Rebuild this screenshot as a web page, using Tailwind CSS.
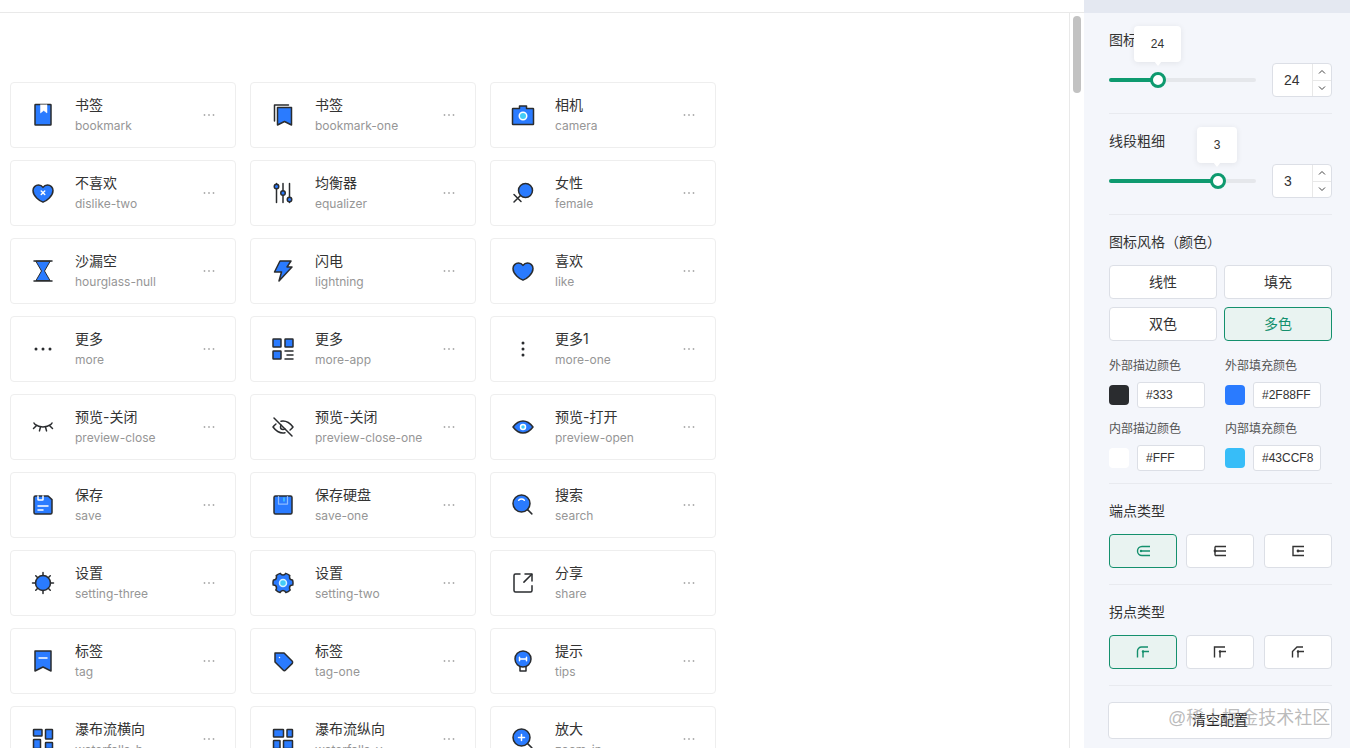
<!DOCTYPE html>
<html lang="zh-CN">
<head>
  <meta charset="UTF-8">
  <title>IconPark</title>
  <script src="https://cdn.jsdelivr.net/npm/@tailwindcss/browser@4"></script>
</head>
<body class="bg-white text-[#333] font-['Inter','Noto_Sans_CJK_SC',sans-serif]">
<div class="relative flex h-[748px] w-[1350px] overflow-hidden">

  <!-- Main column -->
  <div class="flex w-[1084px] flex-col">
    <div class="h-[13px] shrink-0 border-b border-[#e9e9e9]"></div>
    <div class="flex min-h-0 flex-1">
      <div class="min-w-0 flex-1 overflow-hidden pl-[10px] pt-[69px]">
        <div class="grid grid-cols-[repeat(3,226px)] auto-rows-[66px] gap-x-[14px] gap-y-[12px]">

          <!-- bookmark -->
          <div class="flex items-center rounded-[4px] border border-[#eeeeee] pl-[20px] pr-[20px]">
            <svg class="h-6 w-6 shrink-0" viewBox="0 0 48 48" fill="none" stroke="#2a2c2f" stroke-width="3" stroke-linejoin="round" stroke-linecap="round"><rect x="8" y="3" width="32" height="41" rx="1" fill="#2a7bff"/><path d="M19 4v16l6.5-5 6.5 5V4z" fill="#fff" stroke="#fff" stroke-width="1"/></svg>
            <div class="ml-[20px] min-w-0 flex-1"><div class="text-[14px] leading-[20px]">书签</div><div class="mt-[2px] text-[12px] leading-[18px] text-[#969696]">bookmark</div></div>
            <svg class="h-[12px] w-[12px] shrink-0" viewBox="0 0 12 12" fill="#aaa"><circle cx="1.5" cy="6" r="0.9"/><circle cx="6" cy="6" r="0.9"/><circle cx="10.5" cy="6" r="0.9"/></svg>
          </div>
          <!-- bookmark-one -->
          <div class="flex items-center rounded-[4px] border border-[#eeeeee] pl-[20px] pr-[20px]">
            <svg class="h-6 w-6 shrink-0" viewBox="0 0 48 48" fill="none" stroke="#2a2c2f" stroke-width="3" stroke-linejoin="round" stroke-linecap="round"><path d="M7 36V4h28"/><path d="M13 9h28v35l-14-7-14 7z" fill="#2a7bff"/></svg>
            <div class="ml-[20px] min-w-0 flex-1"><div class="text-[14px] leading-[20px]">书签</div><div class="mt-[2px] text-[12px] leading-[18px] text-[#969696]">bookmark-one</div></div>
            <svg class="h-[12px] w-[12px] shrink-0" viewBox="0 0 12 12" fill="#aaa"><circle cx="1.5" cy="6" r="0.9"/><circle cx="6" cy="6" r="0.9"/><circle cx="10.5" cy="6" r="0.9"/></svg>
          </div>
          <!-- camera -->
          <div class="flex items-center rounded-[4px] border border-[#eeeeee] pl-[20px] pr-[20px]">
            <svg class="h-6 w-6 shrink-0" viewBox="0 0 48 48" fill="none" stroke="#2a2c2f" stroke-width="3" stroke-linejoin="round" stroke-linecap="round"><path d="M17 11V6h14v5h13a1 1 0 0 1 1 1v30a1 1 0 0 1-1 1H4a1 1 0 0 1-1-1V12a1 1 0 0 1 1-1z" fill="#2a7bff"/><circle cx="24" cy="26" r="7.5" fill="#43CCF8" stroke="#fff"/></svg>
            <div class="ml-[20px] min-w-0 flex-1"><div class="text-[14px] leading-[20px]">相机</div><div class="mt-[2px] text-[12px] leading-[18px] text-[#969696]">camera</div></div>
            <svg class="h-[12px] w-[12px] shrink-0" viewBox="0 0 12 12" fill="#aaa"><circle cx="1.5" cy="6" r="0.9"/><circle cx="6" cy="6" r="0.9"/><circle cx="10.5" cy="6" r="0.9"/></svg>
          </div>

          <!-- dislike-two -->
          <div class="flex items-center rounded-[4px] border border-[#eeeeee] pl-[20px] pr-[20px]">
            <svg class="h-6 w-6 shrink-0" viewBox="0 0 48 48" fill="none" stroke="#2a2c2f" stroke-width="3" stroke-linejoin="round" stroke-linecap="round"><path d="M15 8C8.925 8 4 12.925 4 19c0 11 13 21 20 23.326C31 40 44 30 44 19c0-6.075-4.925-11-11-11-3.72 0-7.01 1.847-9 4.674A10.987 10.987 0 0 0 15 8Z" fill="#2a7bff"/><path d="M20.5 20l7 7M27.5 20l-7 7" stroke="#fff"/></svg>
            <div class="ml-[20px] min-w-0 flex-1"><div class="text-[14px] leading-[20px]">不喜欢</div><div class="mt-[2px] text-[12px] leading-[18px] text-[#969696]">dislike-two</div></div>
            <svg class="h-[12px] w-[12px] shrink-0" viewBox="0 0 12 12" fill="#aaa"><circle cx="1.5" cy="6" r="0.9"/><circle cx="6" cy="6" r="0.9"/><circle cx="10.5" cy="6" r="0.9"/></svg>
          </div>
          <!-- equalizer -->
          <div class="flex items-center rounded-[4px] border border-[#eeeeee] pl-[20px] pr-[20px]">
            <svg class="h-6 w-6 shrink-0" viewBox="0 0 48 48" fill="none" stroke="#2a2c2f" stroke-width="3" stroke-linejoin="round" stroke-linecap="round"><path d="M11 5v38M24 5v38M37 5v38"/><circle cx="11" cy="11" r="4.5" fill="#2a7bff"/><circle cx="24" cy="24" r="4.5" fill="#2a7bff"/><circle cx="37" cy="37" r="4.5" fill="#2a7bff"/></svg>
            <div class="ml-[20px] min-w-0 flex-1"><div class="text-[14px] leading-[20px]">均衡器</div><div class="mt-[2px] text-[12px] leading-[18px] text-[#969696]">equalizer</div></div>
            <svg class="h-[12px] w-[12px] shrink-0" viewBox="0 0 12 12" fill="#aaa"><circle cx="1.5" cy="6" r="0.9"/><circle cx="6" cy="6" r="0.9"/><circle cx="10.5" cy="6" r="0.9"/></svg>
          </div>
          <!-- female -->
          <div class="flex items-center rounded-[4px] border border-[#eeeeee] pl-[20px] pr-[20px]">
            <svg class="h-6 w-6 shrink-0" viewBox="0 0 48 48" fill="none" stroke="#2a2c2f" stroke-width="3" stroke-linejoin="round" stroke-linecap="round"><circle cx="29" cy="19" r="14" fill="#2a7bff"/><path d="M19 29L6 42M6 27l14 14"/></svg>
            <div class="ml-[20px] min-w-0 flex-1"><div class="text-[14px] leading-[20px]">女性</div><div class="mt-[2px] text-[12px] leading-[18px] text-[#969696]">female</div></div>
            <svg class="h-[12px] w-[12px] shrink-0" viewBox="0 0 12 12" fill="#aaa"><circle cx="1.5" cy="6" r="0.9"/><circle cx="6" cy="6" r="0.9"/><circle cx="10.5" cy="6" r="0.9"/></svg>
          </div>

          <!-- hourglass-null -->
          <div class="flex items-center rounded-[4px] border border-[#eeeeee] pl-[20px] pr-[20px]">
            <svg class="h-6 w-6 shrink-0" viewBox="0 0 48 48" fill="none" stroke="#2a2c2f" stroke-width="3" stroke-linejoin="round" stroke-linecap="round"><path d="M10 5l11 19-11 19h28L27 24 38 5z" fill="#2a7bff" stroke-width="2"/><path d="M6 4h36M6 44h36"/></svg>
            <div class="ml-[20px] min-w-0 flex-1"><div class="text-[14px] leading-[20px]">沙漏空</div><div class="mt-[2px] text-[12px] leading-[18px] text-[#969696]">hourglass-null</div></div>
            <svg class="h-[12px] w-[12px] shrink-0" viewBox="0 0 12 12" fill="#aaa"><circle cx="1.5" cy="6" r="0.9"/><circle cx="6" cy="6" r="0.9"/><circle cx="10.5" cy="6" r="0.9"/></svg>
          </div>
          <!-- lightning -->
          <div class="flex items-center rounded-[4px] border border-[#eeeeee] pl-[20px] pr-[20px]">
            <svg class="h-6 w-6 shrink-0" viewBox="0 0 48 48" fill="none" stroke="#2a2c2f" stroke-width="3" stroke-linejoin="round" stroke-linecap="round"><path d="M18 4h22l-8 12h10L16 44l5-18H7z" fill="#2a7bff"/></svg>
            <div class="ml-[20px] min-w-0 flex-1"><div class="text-[14px] leading-[20px]">闪电</div><div class="mt-[2px] text-[12px] leading-[18px] text-[#969696]">lightning</div></div>
            <svg class="h-[12px] w-[12px] shrink-0" viewBox="0 0 12 12" fill="#aaa"><circle cx="1.5" cy="6" r="0.9"/><circle cx="6" cy="6" r="0.9"/><circle cx="10.5" cy="6" r="0.9"/></svg>
          </div>
          <!-- like -->
          <div class="flex items-center rounded-[4px] border border-[#eeeeee] pl-[20px] pr-[20px]">
            <svg class="h-6 w-6 shrink-0" viewBox="0 0 48 48" fill="none" stroke="#2a2c2f" stroke-width="3" stroke-linejoin="round" stroke-linecap="round"><path d="M15 8C8.925 8 4 12.925 4 19c0 11 13 21 20 23.326C31 40 44 30 44 19c0-6.075-4.925-11-11-11-3.72 0-7.01 1.847-9 4.674A10.987 10.987 0 0 0 15 8Z" fill="#2a7bff"/></svg>
            <div class="ml-[20px] min-w-0 flex-1"><div class="text-[14px] leading-[20px]">喜欢</div><div class="mt-[2px] text-[12px] leading-[18px] text-[#969696]">like</div></div>
            <svg class="h-[12px] w-[12px] shrink-0" viewBox="0 0 12 12" fill="#aaa"><circle cx="1.5" cy="6" r="0.9"/><circle cx="6" cy="6" r="0.9"/><circle cx="10.5" cy="6" r="0.9"/></svg>
          </div>

          <!-- more -->
          <div class="flex items-center rounded-[4px] border border-[#eeeeee] pl-[20px] pr-[20px]">
            <svg class="h-6 w-6 shrink-0" viewBox="0 0 48 48" fill="#2a2c2f"><circle cx="10" cy="24" r="3"/><circle cx="24" cy="24" r="3"/><circle cx="38" cy="24" r="3"/></svg>
            <div class="ml-[20px] min-w-0 flex-1"><div class="text-[14px] leading-[20px]">更多</div><div class="mt-[2px] text-[12px] leading-[18px] text-[#969696]">more</div></div>
            <svg class="h-[12px] w-[12px] shrink-0" viewBox="0 0 12 12" fill="#aaa"><circle cx="1.5" cy="6" r="0.9"/><circle cx="6" cy="6" r="0.9"/><circle cx="10.5" cy="6" r="0.9"/></svg>
          </div>
          <!-- more-app -->
          <div class="flex items-center rounded-[4px] border border-[#eeeeee] pl-[20px] pr-[20px]">
            <svg class="h-6 w-6 shrink-0" viewBox="0 0 48 48" fill="none" stroke="#2a2c2f" stroke-width="3" stroke-linejoin="round" stroke-linecap="round"><rect x="4" y="4" width="16" height="16" rx="1" fill="#2a7bff"/><rect x="28" y="4" width="16" height="16" rx="1" fill="#2a7bff"/><rect x="4" y="28" width="16" height="16" rx="1" fill="#2a7bff"/><path d="M28 28h16M32 36h12M28 44h16"/></svg>
            <div class="ml-[20px] min-w-0 flex-1"><div class="text-[14px] leading-[20px]">更多</div><div class="mt-[2px] text-[12px] leading-[18px] text-[#969696]">more-app</div></div>
            <svg class="h-[12px] w-[12px] shrink-0" viewBox="0 0 12 12" fill="#aaa"><circle cx="1.5" cy="6" r="0.9"/><circle cx="6" cy="6" r="0.9"/><circle cx="10.5" cy="6" r="0.9"/></svg>
          </div>
          <!-- more-one -->
          <div class="flex items-center rounded-[4px] border border-[#eeeeee] pl-[20px] pr-[20px]">
            <svg class="h-6 w-6 shrink-0" viewBox="0 0 48 48" fill="#2a2c2f"><circle cx="24" cy="12" r="3"/><circle cx="24" cy="24" r="3"/><circle cx="24" cy="36" r="3"/></svg>
            <div class="ml-[20px] min-w-0 flex-1"><div class="text-[14px] leading-[20px]">更多1</div><div class="mt-[2px] text-[12px] leading-[18px] text-[#969696]">more-one</div></div>
            <svg class="h-[12px] w-[12px] shrink-0" viewBox="0 0 12 12" fill="#aaa"><circle cx="1.5" cy="6" r="0.9"/><circle cx="6" cy="6" r="0.9"/><circle cx="10.5" cy="6" r="0.9"/></svg>
          </div>

          <!-- preview-close -->
          <div class="flex items-center rounded-[4px] border border-[#eeeeee] pl-[20px] pr-[20px]">
            <svg class="h-6 w-6 shrink-0" viewBox="0 0 48 48" fill="none" stroke="#2a2c2f" stroke-width="3" stroke-linejoin="round" stroke-linecap="round"><path d="M6 16C6.63 17.22 7.6 18.35 8.82 19.36 12.26 22.17 17.78 24 24 24s11.74-1.83 15.18-4.64C40.4 18.35 41.37 17.22 42 16"/><path d="M28.98 24l2.07 7.73M37.35 21.35l5.66 5.66M5 27.01l5.66-5.66M16.93 31.73L19 24"/></svg>
            <div class="ml-[20px] min-w-0 flex-1"><div class="text-[14px] leading-[20px]">预览-关闭</div><div class="mt-[2px] text-[12px] leading-[18px] text-[#969696]">preview-close</div></div>
            <svg class="h-[12px] w-[12px] shrink-0" viewBox="0 0 12 12" fill="#aaa"><circle cx="1.5" cy="6" r="0.9"/><circle cx="6" cy="6" r="0.9"/><circle cx="10.5" cy="6" r="0.9"/></svg>
          </div>
          <!-- preview-close-one -->
          <div class="flex items-center rounded-[4px] border border-[#eeeeee] pl-[20px] pr-[20px]">
            <svg class="h-6 w-6 shrink-0" viewBox="0 0 48 48" fill="none" stroke="#2a2c2f" stroke-width="3" stroke-linejoin="round" stroke-linecap="round"><path d="M9.86 18C6.24 21 4 24 4 24s8.95 12 20 12c1.37 0 2.71-.18 4-.51M20.03 12.5c1.28-.32 2.61-.5 3.97-.5 11.05 0 20 12 20 12s-2.24 3-5.86 6"/><path d="M20.31 20.62A5 5 0 0 0 19 24a5 5 0 0 0 5 5c1.36 0 2.6-.55 3.5-1.43"/><path d="M42 42L6 6"/></svg>
            <div class="ml-[20px] min-w-0 flex-1"><div class="text-[14px] leading-[20px]">预览-关闭</div><div class="mt-[2px] text-[12px] leading-[18px] text-[#969696]">preview-close-one</div></div>
            <svg class="h-[12px] w-[12px] shrink-0" viewBox="0 0 12 12" fill="#aaa"><circle cx="1.5" cy="6" r="0.9"/><circle cx="6" cy="6" r="0.9"/><circle cx="10.5" cy="6" r="0.9"/></svg>
          </div>
          <!-- preview-open -->
          <div class="flex items-center rounded-[4px] border border-[#eeeeee] pl-[20px] pr-[20px]">
            <svg class="h-6 w-6 shrink-0" viewBox="0 0 48 48" fill="none" stroke="#2a2c2f" stroke-width="3" stroke-linejoin="round" stroke-linecap="round"><path d="M24 36c11.05 0 20-12 20-12s-8.95-12-20-12S4 24 4 24s8.95 12 20 12Z" fill="#2a7bff"/><circle cx="24" cy="24" r="5" fill="#43CCF8" stroke="#fff"/></svg>
            <div class="ml-[20px] min-w-0 flex-1"><div class="text-[14px] leading-[20px]">预览-打开</div><div class="mt-[2px] text-[12px] leading-[18px] text-[#969696]">preview-open</div></div>
            <svg class="h-[12px] w-[12px] shrink-0" viewBox="0 0 12 12" fill="#aaa"><circle cx="1.5" cy="6" r="0.9"/><circle cx="6" cy="6" r="0.9"/><circle cx="10.5" cy="6" r="0.9"/></svg>
          </div>

          <!-- save -->
          <div class="flex items-center rounded-[4px] border border-[#eeeeee] pl-[20px] pr-[20px]">
            <svg class="h-6 w-6 shrink-0" viewBox="0 0 48 48" fill="none" stroke="#2a2c2f" stroke-width="3" stroke-linejoin="round" stroke-linecap="round"><path d="M6 9c0-1.66 1.34-3 3-3h25.28L42 13.21V39c0 1.66-1.34 3-3 3H9c-1.66 0-3-1.34-3-3V9Z" fill="#2a7bff"/><path d="M24 6v7.38c0 .34-.45.62-1 .62h-8c-.55 0-1-.28-1-.62V6" stroke="#fff"/><path d="M14 26h20M14 34h10" stroke="#fff"/></svg>
            <div class="ml-[20px] min-w-0 flex-1"><div class="text-[14px] leading-[20px]">保存</div><div class="mt-[2px] text-[12px] leading-[18px] text-[#969696]">save</div></div>
            <svg class="h-[12px] w-[12px] shrink-0" viewBox="0 0 12 12" fill="#aaa"><circle cx="1.5" cy="6" r="0.9"/><circle cx="6" cy="6" r="0.9"/><circle cx="10.5" cy="6" r="0.9"/></svg>
          </div>
          <!-- save-one -->
          <div class="flex items-center rounded-[4px] border border-[#eeeeee] pl-[20px] pr-[20px]">
            <svg class="h-6 w-6 shrink-0" viewBox="0 0 48 48" fill="none" stroke="#2a2c2f" stroke-width="3" stroke-linejoin="round" stroke-linecap="round"><rect x="6" y="6" width="36" height="36" rx="3" fill="#2a7bff"/><path d="M15 7v15h18V7" stroke="#8fbcff" stroke-width="2.5"/><path d="M26 10v6" stroke="#43CCF8"/></svg>
            <div class="ml-[20px] min-w-0 flex-1"><div class="text-[14px] leading-[20px]">保存硬盘</div><div class="mt-[2px] text-[12px] leading-[18px] text-[#969696]">save-one</div></div>
            <svg class="h-[12px] w-[12px] shrink-0" viewBox="0 0 12 12" fill="#aaa"><circle cx="1.5" cy="6" r="0.9"/><circle cx="6" cy="6" r="0.9"/><circle cx="10.5" cy="6" r="0.9"/></svg>
          </div>
          <!-- search -->
          <div class="flex items-center rounded-[4px] border border-[#eeeeee] pl-[20px] pr-[20px]">
            <svg class="h-6 w-6 shrink-0" viewBox="0 0 48 48" fill="none" stroke="#2a2c2f" stroke-width="3" stroke-linejoin="round" stroke-linecap="round"><path d="M21 38c9.39 0 17-7.61 17-17S30.39 4 21 4 4 11.61 4 21s7.61 17 17 17Z" fill="#2a7bff"/><path d="M26.66 14.34A8 8 0 0 0 21 12a8 8 0 0 0-5.66 2.34" stroke="#fff"/><path d="M33.22 33.22l8.49 8.49"/></svg>
            <div class="ml-[20px] min-w-0 flex-1"><div class="text-[14px] leading-[20px]">搜索</div><div class="mt-[2px] text-[12px] leading-[18px] text-[#969696]">search</div></div>
            <svg class="h-[12px] w-[12px] shrink-0" viewBox="0 0 12 12" fill="#aaa"><circle cx="1.5" cy="6" r="0.9"/><circle cx="6" cy="6" r="0.9"/><circle cx="10.5" cy="6" r="0.9"/></svg>
          </div>

          <!-- setting-three -->
          <div class="flex items-center rounded-[4px] border border-[#eeeeee] pl-[20px] pr-[20px]">
            <svg class="h-6 w-6 shrink-0" viewBox="0 0 48 48" fill="none" stroke="#2a2c2f" stroke-width="3" stroke-linejoin="round" stroke-linecap="round"><circle cx="24" cy="24" r="15" fill="#2a7bff"/><path d="M24 3v6M24 39v6M3 24h6M39 24h6M9.5 9.5l4 4M38.5 9.5l-4 4M9.5 38.5l4-4M38.5 38.5l-4-4"/></svg>
            <div class="ml-[20px] min-w-0 flex-1"><div class="text-[14px] leading-[20px]">设置</div><div class="mt-[2px] text-[12px] leading-[18px] text-[#969696]">setting-three</div></div>
            <svg class="h-[12px] w-[12px] shrink-0" viewBox="0 0 12 12" fill="#aaa"><circle cx="1.5" cy="6" r="0.9"/><circle cx="6" cy="6" r="0.9"/><circle cx="10.5" cy="6" r="0.9"/></svg>
          </div>
          <!-- setting-two -->
          <div class="flex items-center rounded-[4px] border border-[#eeeeee] pl-[20px] pr-[20px]">
            <svg class="h-6 w-6 shrink-0" viewBox="0 0 48 48" fill="none" stroke="#2a2c2f" stroke-width="3" stroke-linejoin="round" stroke-linecap="round"><path d="M18.28 43.17c-3.35-1-6.33-2.85-8.69-5.3C10.47 36.82 11 35.47 11 34c0-3.31-2.69-6-6-6-.2 0-.4.01-.59.03A20 20 0 0 1 4 24c0-2.09.32-4.11.92-6H5c3.31 0 6-2.69 6-6 0-.95-.22-1.85-.62-2.65 2.32-2.15 5.14-3.76 8.27-4.63C19.64 6.67 21.67 8 24 8s4.36-1.33 5.35-3.28c3.13.87 5.95 2.48 8.27 4.63-.4.8-.62 1.7-.62 2.65 0 3.31 2.69 6 6 6h.08c.6 1.89.92 3.91.92 6 0 1.38-.14 2.73-.41 4.03-.19-.02-.39-.03-.59-.03-3.31 0-6 2.69-6 6 0 1.47.53 2.82 1.41 3.87-2.36 2.45-5.34 4.3-8.69 5.3C28.94 40.75 26.68 39 24 39s-4.94 1.75-5.72 4.17Z" fill="#2a7bff"/><circle cx="24" cy="24" r="7" fill="#43CCF8" stroke="#d8f3ff"/></svg>
            <div class="ml-[20px] min-w-0 flex-1"><div class="text-[14px] leading-[20px]">设置</div><div class="mt-[2px] text-[12px] leading-[18px] text-[#969696]">setting-two</div></div>
            <svg class="h-[12px] w-[12px] shrink-0" viewBox="0 0 12 12" fill="#aaa"><circle cx="1.5" cy="6" r="0.9"/><circle cx="6" cy="6" r="0.9"/><circle cx="10.5" cy="6" r="0.9"/></svg>
          </div>
          <!-- share -->
          <div class="flex items-center rounded-[4px] border border-[#eeeeee] pl-[20px] pr-[20px]">
            <svg class="h-6 w-6 shrink-0" viewBox="0 0 48 48" fill="none" stroke="#2a2c2f" stroke-width="3" stroke-linejoin="round" stroke-linecap="round"><path d="M28 6h14v14"/><path d="M42 29.47V39c0 1.66-1.34 3-3 3H9c-1.66 0-3-1.34-3-3V9c0-1.66 1.34-3 3-3h9"/><path d="M25.8 22.2L41.1 6.9"/></svg>
            <div class="ml-[20px] min-w-0 flex-1"><div class="text-[14px] leading-[20px]">分享</div><div class="mt-[2px] text-[12px] leading-[18px] text-[#969696]">share</div></div>
            <svg class="h-[12px] w-[12px] shrink-0" viewBox="0 0 12 12" fill="#aaa"><circle cx="1.5" cy="6" r="0.9"/><circle cx="6" cy="6" r="0.9"/><circle cx="10.5" cy="6" r="0.9"/></svg>
          </div>

          <!-- tag -->
          <div class="flex items-center rounded-[4px] border border-[#eeeeee] pl-[20px] pr-[20px]">
            <svg class="h-6 w-6 shrink-0" viewBox="0 0 48 48" fill="none" stroke="#2a2c2f" stroke-width="3" stroke-linejoin="round" stroke-linecap="round"><path d="M8 4h32v40l-16-8-16 8z" fill="#2a7bff"/><path d="M16 18h16" stroke="#fff"/></svg>
            <div class="ml-[20px] min-w-0 flex-1"><div class="text-[14px] leading-[20px]">标签</div><div class="mt-[2px] text-[12px] leading-[18px] text-[#969696]">tag</div></div>
            <svg class="h-[12px] w-[12px] shrink-0" viewBox="0 0 12 12" fill="#aaa"><circle cx="1.5" cy="6" r="0.9"/><circle cx="6" cy="6" r="0.9"/><circle cx="10.5" cy="6" r="0.9"/></svg>
          </div>
          <!-- tag-one -->
          <div class="flex items-center rounded-[4px] border border-[#eeeeee] pl-[20px] pr-[20px]">
            <svg class="h-6 w-6 shrink-0" viewBox="0 0 48 48" fill="none" stroke="#2a2c2f" stroke-width="3" stroke-linejoin="round" stroke-linecap="round"><path d="M42.17 29.25L29.26 42.15a3.6 3.6 0 0 1-5.09 0L8 26V8h18.17l16 16.15a3.6 3.6 0 0 1 0 5.1Z" fill="#2a7bff"/><circle cx="17" cy="17" r="1.5" fill="#fff" stroke="none"/></svg>
            <div class="ml-[20px] min-w-0 flex-1"><div class="text-[14px] leading-[20px]">标签</div><div class="mt-[2px] text-[12px] leading-[18px] text-[#969696]">tag-one</div></div>
            <svg class="h-[12px] w-[12px] shrink-0" viewBox="0 0 12 12" fill="#aaa"><circle cx="1.5" cy="6" r="0.9"/><circle cx="6" cy="6" r="0.9"/><circle cx="10.5" cy="6" r="0.9"/></svg>
          </div>
          <!-- tips -->
          <div class="flex items-center rounded-[4px] border border-[#eeeeee] pl-[20px] pr-[20px]">
            <svg class="h-6 w-6 shrink-0" viewBox="0 0 48 48" fill="none" stroke="#2a2c2f" stroke-width="3" stroke-linejoin="round" stroke-linecap="round"><path d="M18 35v9h12v-9"/><circle cx="24" cy="20" r="16" fill="#2a7bff"/><path d="M17 16.500v7M31 16.500v7M17 20h14" stroke="#fff"/></svg>
            <div class="ml-[20px] min-w-0 flex-1"><div class="text-[14px] leading-[20px]">提示</div><div class="mt-[2px] text-[12px] leading-[18px] text-[#969696]">tips</div></div>
            <svg class="h-[12px] w-[12px] shrink-0" viewBox="0 0 12 12" fill="#aaa"><circle cx="1.5" cy="6" r="0.9"/><circle cx="6" cy="6" r="0.9"/><circle cx="10.5" cy="6" r="0.9"/></svg>
          </div>

          <!-- waterfalls-h -->
          <div class="flex items-center rounded-[4px] border border-[#eeeeee] pl-[20px] pr-[20px]">
            <svg class="h-6 w-6 shrink-0" viewBox="0 0 48 48" fill="none" stroke="#2a2c2f" stroke-width="3" stroke-linejoin="round" stroke-linecap="round"><rect x="5" y="5" width="17" height="13" rx="1" fill="#2a7bff"/><rect x="29" y="5" width="14" height="19" rx="1" fill="#2a7bff"/><rect x="5" y="25" width="14" height="18" rx="1" fill="#2a7bff"/><rect x="29" y="31" width="14" height="12" rx="1" fill="#2a7bff"/></svg>
            <div class="ml-[20px] min-w-0 flex-1"><div class="text-[14px] leading-[20px]">瀑布流横向</div><div class="mt-[2px] text-[12px] leading-[18px] text-[#969696]">waterfalls-h</div></div>
            <svg class="h-[12px] w-[12px] shrink-0" viewBox="0 0 12 12" fill="#aaa"><circle cx="1.5" cy="6" r="0.9"/><circle cx="6" cy="6" r="0.9"/><circle cx="10.5" cy="6" r="0.9"/></svg>
          </div>
          <!-- waterfalls-v -->
          <div class="flex items-center rounded-[4px] border border-[#eeeeee] pl-[20px] pr-[20px]">
            <svg class="h-6 w-6 shrink-0" viewBox="0 0 48 48" fill="none" stroke="#2a2c2f" stroke-width="3" stroke-linejoin="round" stroke-linecap="round"><rect x="5" y="5" width="20" height="15" rx="1" fill="#2a7bff"/><rect x="32" y="5" width="11" height="15" rx="1" fill="#2a7bff"/><rect x="5" y="27" width="13" height="16" rx="1" fill="#2a7bff"/><rect x="25" y="27" width="18" height="16" rx="1" fill="#2a7bff"/></svg>
            <div class="ml-[20px] min-w-0 flex-1"><div class="text-[14px] leading-[20px]">瀑布流纵向</div><div class="mt-[2px] text-[12px] leading-[18px] text-[#969696]">waterfalls-v</div></div>
            <svg class="h-[12px] w-[12px] shrink-0" viewBox="0 0 12 12" fill="#aaa"><circle cx="1.5" cy="6" r="0.9"/><circle cx="6" cy="6" r="0.9"/><circle cx="10.5" cy="6" r="0.9"/></svg>
          </div>
          <!-- zoom-in -->
          <div class="flex items-center rounded-[4px] border border-[#eeeeee] pl-[20px] pr-[20px]">
            <svg class="h-6 w-6 shrink-0" viewBox="0 0 48 48" fill="none" stroke="#2a2c2f" stroke-width="3" stroke-linejoin="round" stroke-linecap="round"><path d="M21 38c9.39 0 17-7.61 17-17S30.39 4 21 4 4 11.61 4 21s7.61 17 17 17Z" fill="#2a7bff"/><path d="M21 15v12M15 21h12" stroke="#fff"/><path d="M33.22 33.22l8.49 8.49"/></svg>
            <div class="ml-[20px] min-w-0 flex-1"><div class="text-[14px] leading-[20px]">放大</div><div class="mt-[2px] text-[12px] leading-[18px] text-[#969696]">zoom-in</div></div>
            <svg class="h-[12px] w-[12px] shrink-0" viewBox="0 0 12 12" fill="#aaa"><circle cx="1.5" cy="6" r="0.9"/><circle cx="6" cy="6" r="0.9"/><circle cx="10.5" cy="6" r="0.9"/></svg>
          </div>

        </div>
      </div>
      <!-- Scrollbar -->
      <div class="w-[15px] shrink-0 border-l border-[#e9e9e9] pl-[3px] pt-[3px]">
        <div class="h-[77px] w-[8px] rounded-full bg-[#c2c2c2]"></div>
      </div>
    </div>
  </div>

  <!-- Settings panel -->
  <aside class="flex w-[266px] shrink-0 flex-col bg-[#f4f6fb] font-['Liberation_Sans','Noto_Sans_CJK_SC',sans-serif]">
    <div class="h-[13px] shrink-0 bg-[#e4e8f1]"></div>
    <div class="pl-[25px] pr-[18px]">

      <section class="border-b border-[#e8eaef] pb-[16px] pt-[17px]">
        <h3 class="text-[14px] leading-[20px]">图标大小</h3>
        <div class="relative mt-[13px] flex h-[34px] items-center justify-between">
          <div class="relative h-[4px] w-[147px] rounded-full bg-[#e5e7eb]">
            <div class="h-[4px] w-[49px] rounded-full bg-[#0e9a6f]"></div>
            <div class="absolute left-[41px] top-[-6px] h-4 w-4 rounded-full border-[3px] border-[#0e9a6f] bg-white"></div>
            <div class="absolute left-[25px] top-[-52px] flex h-[36px] w-[47px] items-center justify-center rounded-[4px] bg-white text-[12px] shadow-[0_1px_6px_rgba(0,0,0,0.08)]">24</div>
            <div class="absolute left-[45px] top-[-17px] h-0 w-0 border-x-[4px] border-t-[5px] border-x-transparent border-t-white"></div>
          </div>
          <div class="flex h-[34px] w-[60px] overflow-hidden rounded-[4px] border border-[#dcdfe6] bg-white">
            <div class="w-[39px] pl-[11px] text-[14px] leading-[32px]">24</div>
            <div class="flex flex-1 flex-col border-l border-[#e8e8e8]">
              <div class="flex flex-1 items-center justify-center border-b border-[#e8e8e8]"><svg class="h-2 w-2" viewBox="0 0 8 8" fill="none" stroke="#444" stroke-width="1"><path d="M1 5.500l3-3 3 3"/></svg></div>
              <div class="flex flex-1 items-center justify-center"><svg class="h-2 w-2" viewBox="0 0 8 8" fill="none" stroke="#444" stroke-width="1"><path d="M1 2.500l3 3 3-3"/></svg></div>
            </div>
          </div>
        </div>
      </section>

      <section class="border-b border-[#e8eaef] pb-[16px] pt-[17px]">
        <h3 class="text-[14px] leading-[20px]">线段粗细</h3>
        <div class="relative mt-[13px] flex h-[34px] items-center justify-between">
          <div class="relative h-[4px] w-[147px] rounded-full bg-[#e5e7eb]">
            <div class="h-[4px] w-[109px] rounded-full bg-[#0e9a6f]"></div>
            <div class="absolute left-[101px] top-[-6px] h-4 w-4 rounded-full border-[3px] border-[#0e9a6f] bg-white"></div>
            <div class="absolute left-[88px] top-[-52px] flex h-[36px] w-[40px] items-center justify-center rounded-[4px] bg-white text-[12px] shadow-[0_1px_6px_rgba(0,0,0,0.08)]">3</div>
            <div class="absolute left-[104px] top-[-17px] h-0 w-0 border-x-[4px] border-t-[5px] border-x-transparent border-t-white"></div>
          </div>
          <div class="flex h-[34px] w-[60px] overflow-hidden rounded-[4px] border border-[#dcdfe6] bg-white">
            <div class="w-[39px] pl-[11px] text-[14px] leading-[32px]">3</div>
            <div class="flex flex-1 flex-col border-l border-[#e8e8e8]">
              <div class="flex flex-1 items-center justify-center border-b border-[#e8e8e8]"><svg class="h-2 w-2" viewBox="0 0 8 8" fill="none" stroke="#444" stroke-width="1"><path d="M1 5.500l3-3 3 3"/></svg></div>
              <div class="flex flex-1 items-center justify-center"><svg class="h-2 w-2" viewBox="0 0 8 8" fill="none" stroke="#444" stroke-width="1"><path d="M1 2.500l3 3 3-3"/></svg></div>
            </div>
          </div>
        </div>
      </section>

      <section class="border-b border-[#e8eaef] pb-[12px] pt-[17px]">
        <h3 class="text-[14px] leading-[20px]">图标风格（颜色）</h3>
        <div class="mt-[13px] grid grid-cols-[108px_108px] justify-between gap-y-[8px]">
          <button class="h-[34px] rounded-[4px] border border-[#dcdfe6] bg-white text-[14px]">线性</button>
          <button class="h-[34px] rounded-[4px] border border-[#dcdfe6] bg-white text-[14px]">填充</button>
          <button class="h-[34px] rounded-[4px] border border-[#dcdfe6] bg-white text-[14px]">双色</button>
          <button class="h-[34px] rounded-[4px] border border-[#14906d] bg-[#e9f3f1] text-[14px] text-[#14906d]">多色</button>
        </div>
        <div class="mt-[16px] grid grid-cols-[100px_100px] gap-x-[16px] gap-y-[12px]">
          <div>
            <div class="text-[12px] leading-[18px] text-[#555]">外部描边颜色</div>
            <div class="mt-[7px] flex items-center gap-[8px]"><span class="h-5 w-5 rounded-[4px] bg-[#2a2c2f]"></span><span class="h-[26px] w-[68px] rounded-[3px] border border-[#dcdfe6] bg-white pl-[8px] text-[12px] leading-[24px]">#333</span></div>
          </div>
          <div>
            <div class="text-[12px] leading-[18px] text-[#555]">外部填充颜色</div>
            <div class="mt-[7px] flex items-center gap-[8px]"><span class="h-5 w-5 rounded-[4px] bg-[#2a7bff]"></span><span class="h-[26px] w-[68px] rounded-[3px] border border-[#dcdfe6] bg-white pl-[8px] text-[12px] leading-[24px]">#2F88FF</span></div>
          </div>
          <div>
            <div class="text-[12px] leading-[18px] text-[#555]">内部描边颜色</div>
            <div class="mt-[7px] flex items-center gap-[8px]"><span class="h-5 w-5 rounded-[4px] bg-white"></span><span class="h-[26px] w-[68px] rounded-[3px] border border-[#dcdfe6] bg-white pl-[8px] text-[12px] leading-[24px]">#FFF</span></div>
          </div>
          <div>
            <div class="text-[12px] leading-[18px] text-[#555]">内部填充颜色</div>
            <div class="mt-[7px] flex items-center gap-[8px]"><span class="h-5 w-5 rounded-[4px] bg-[#37bdf8]"></span><span class="h-[26px] w-[68px] rounded-[3px] border border-[#dcdfe6] bg-white pl-[8px] text-[12px] leading-[24px]">#43CCF8</span></div>
          </div>
        </div>
      </section>

      <section class="border-b border-[#e8eaef] pb-[16px] pt-[17px]">
        <h3 class="text-[14px] leading-[20px]">端点类型</h3>
        <div class="mt-[13px] grid grid-cols-[77px_78px_68px]">
          <button class="flex h-[34px] w-[68px] items-center justify-center rounded-[4px] border border-[#14906d] bg-[#e9f3f1]"><svg class="h-3 w-4" viewBox="0 0 16 12" fill="none" stroke="#14906d" stroke-width="1.400"><path d="M15 1.500H7a4.500 4.500 0 0 0 0 9h8M6 6h9"/><circle cx="6" cy="6" r="1.200" fill="#14906d" stroke="none"/></svg></button>
          <button class="flex h-[34px] w-[68px] items-center justify-center rounded-[4px] border border-[#dcdfe6] bg-white"><svg class="h-3 w-4" viewBox="0 0 16 12" fill="none" stroke="#333" stroke-width="1.400"><path d="M3 1.500h11M3 6h11M3 10.500h11M3 1.500v9"/><circle cx="3" cy="6" r="1.400" fill="#333" stroke="none"/></svg></button>
          <button class="flex h-[34px] w-[68px] items-center justify-center rounded-[4px] border border-[#dcdfe6] bg-white"><svg class="h-3 w-4" viewBox="0 0 16 12" fill="none" stroke="#333" stroke-width="1.400"><path d="M14 1.500H3v9h11M8 6h6"/><circle cx="8" cy="6" r="1.400" fill="#333" stroke="none"/></svg></button>
        </div>
      </section>

      <section class="border-b border-[#e8eaef] pb-[16px] pt-[17px]">
        <h3 class="text-[14px] leading-[20px]">拐点类型</h3>
        <div class="mt-[13px] grid grid-cols-[77px_78px_68px]">
          <button class="flex h-[34px] w-[68px] items-center justify-center rounded-[4px] border border-[#14906d] bg-[#e9f3f1]"><svg class="h-3 w-4" viewBox="0 0 16 12" fill="none" stroke="#14906d" stroke-width="1.400"><path d="M2.500 11.500V5a4 4 0 0 1 4-4H13M8 11.500V5.500h6"/><circle cx="8" cy="5.500" r="1.200" fill="#14906d" stroke="none"/></svg></button>
          <button class="flex h-[34px] w-[68px] items-center justify-center rounded-[4px] border border-[#dcdfe6] bg-white"><svg class="h-3 w-4" viewBox="0 0 16 12" fill="none" stroke="#333" stroke-width="1.400"><path d="M2.500 11.500V1H13M8 11.500V5.500h6"/><circle cx="8" cy="5.500" r="1.200" fill="#333" stroke="none"/></svg></button>
          <button class="flex h-[34px] w-[68px] items-center justify-center rounded-[4px] border border-[#dcdfe6] bg-white"><svg class="h-3 w-4" viewBox="0 0 16 12" fill="none" stroke="#333" stroke-width="1.400"><path d="M2.500 11.500V5.500L7 1h6M8 11.500V5.500h6"/><circle cx="8" cy="5.500" r="1.200" fill="#333" stroke="none"/></svg></button>
        </div>
      </section>

      <button class="mt-[16px] ml-[-1px] block h-[37px] w-[224px] rounded-[4px] border border-[#dcdfe6] bg-white text-[14px] text-[#222]">清空配置</button>
    </div>
  </aside>

  <!-- Site watermark -->
  <div class="pointer-events-none absolute left-[1168px] top-[705px] font-['Liberation_Sans','Noto_Sans_CJK_SC',sans-serif] text-[18px] leading-[26px] text-[#777]/50">@稀土掘金技术社区</div>
</div>
</body>
</html>
